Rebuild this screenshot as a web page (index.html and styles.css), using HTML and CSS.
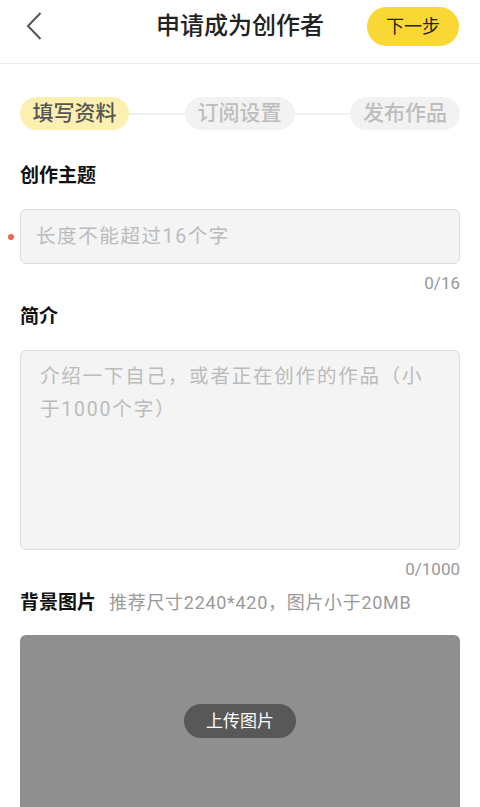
FILE: index.html
```html
<!DOCTYPE html>
<html lang="zh">
<head>
<meta charset="utf-8">
<link rel="stylesheet" href="styles.css">
</head>
<body>
<header class="topbar">
  <div class="back">
    <svg width="18" height="28" viewBox="0 0 18 28"><path d="M15.5 1 L3 14 L15.5 27" fill="none" stroke="#555" stroke-width="2"/></svg>
  </div>
  <h1 class="title">申请成为创作者</h1>
  <div class="next">下一步</div>
</header>
<main class="content">
  <div class="steps">
    <span class="step active">填写资料</span>
    <span class="line"></span>
    <span class="step">订阅设置</span>
    <span class="line"></span>
    <span class="step">发布作品</span>
  </div>

  <div class="label first">创作主题</div>
  <div class="field-row">
    <span class="dot"></span>
    <div class="input">长度不能超过16个字</div>
  </div>
  <div class="count">0/16</div>

  <div class="label">简介</div>
  <div class="textarea">介绍一下自己，或者正在创作的作品（小于1000个字）</div>
  <div class="count">0/1000</div>

  <div class="label bg-label">背景图片<span class="hint">推荐尺寸2240*420，图片小于20MB</span></div>
  <div class="upload">
    <span class="upload-btn">上传图片</span>
  </div>
</main>
</body>
</html>
```
FILE: styles.css
```css
* { box-sizing: border-box; margin: 0; padding: 0; }
html, body { background: #fff; }
body {
  width: 480px;
  height: 807px;
  overflow: hidden;
  font-family: "Roboto", "Noto Sans CJK SC", "Noto Sans", sans-serif;
  color: #222;
}
.topbar {
  height: 64px;
  border-bottom: 1px solid #ececec;
  display: flex;
  align-items: center;
  padding: 0 21px 11px 25px;
  position: relative;
}
.back { width: 18px; height: 28px; display: flex; }
.title {
  position: absolute;
  left: 0; right: 0;
  top: 8px;
  text-align: center;
  font-size: 24px;
  font-weight: 500;
  line-height: 36px;
  color: #222;
  pointer-events: none;
}
.next {
  margin-left: auto;
  width: 92px;
  height: 39px;
  border-radius: 20px;
  background: #f9d735;
  font-size: 18px;
  line-height: 39px;
  text-align: center;
  color: #222;
}
.content { padding: 33px 20px 0 20px; }
.steps { display: flex; align-items: center; height: 33px; }
.step {
  width: 110px;
  height: 33px;
  border-radius: 17px;
  background: #f2f2f2;
  color: #bdbdbd;
  font-size: 21px;
  font-weight: 500;
  line-height: 33px;
  text-align: center;
  flex: none;
}
.step.active { background: #fcf0b0; color: #555; width: 109px; }
.line { flex: 1; height: 2px; background: #f0f0f0; }
.label {
  font-size: 19px;
  font-weight: 700;
  line-height: 26px;
  color: #111;
  margin-top: 9px;
}
.label.first { margin-top: 33px; }
.field-row { position: relative; margin-top: 20px; }
.dot {
  position: absolute;
  left: -12px; top: 25px;
  width: 6px; height: 6px;
  border-radius: 50%;
  background: #f0654f;
}
.input {
  height: 55px;
  border: 1px solid #dcdcdc;
  border-radius: 6px;
  background: #f4f4f4;
  font-size: 19.5px;
  letter-spacing: 1.6px;
  line-height: 53px;
  padding-left: 15px;
  color: #bbb;
}
.count {
  text-align: right;
  font-size: 17px;
  line-height: 24px;
  color: #999;
  margin-top: 7px;
}
.textarea {
  margin-top: 20px;
  height: 200px;
  border: 1px solid #dcdcdc;
  border-radius: 6px;
  background: #f4f4f4;
  font-size: 19.5px;
  letter-spacing: 1.8px;
  line-height: 32.5px;
  padding: 10px 19px 0 19px;
  color: #bbb;
}
.bg-label { display: flex; align-items: baseline; }
.hint { font-size: 18px; font-weight: 400; color: #999; margin-left: 13px; letter-spacing: 0.7px; }
.upload {
  margin-top: 19px;
  height: 200px;
  border-radius: 6px;
  background: #8f8f8f;
  display: flex;
  justify-content: center;
  padding-top: 69px;
}
.upload-btn {
  width: 112px;
  height: 34px;
  border-radius: 17px;
  background: #585858;
  color: #fff;
  font-size: 17px;
  line-height: 34px;
  text-align: center;
}
```
